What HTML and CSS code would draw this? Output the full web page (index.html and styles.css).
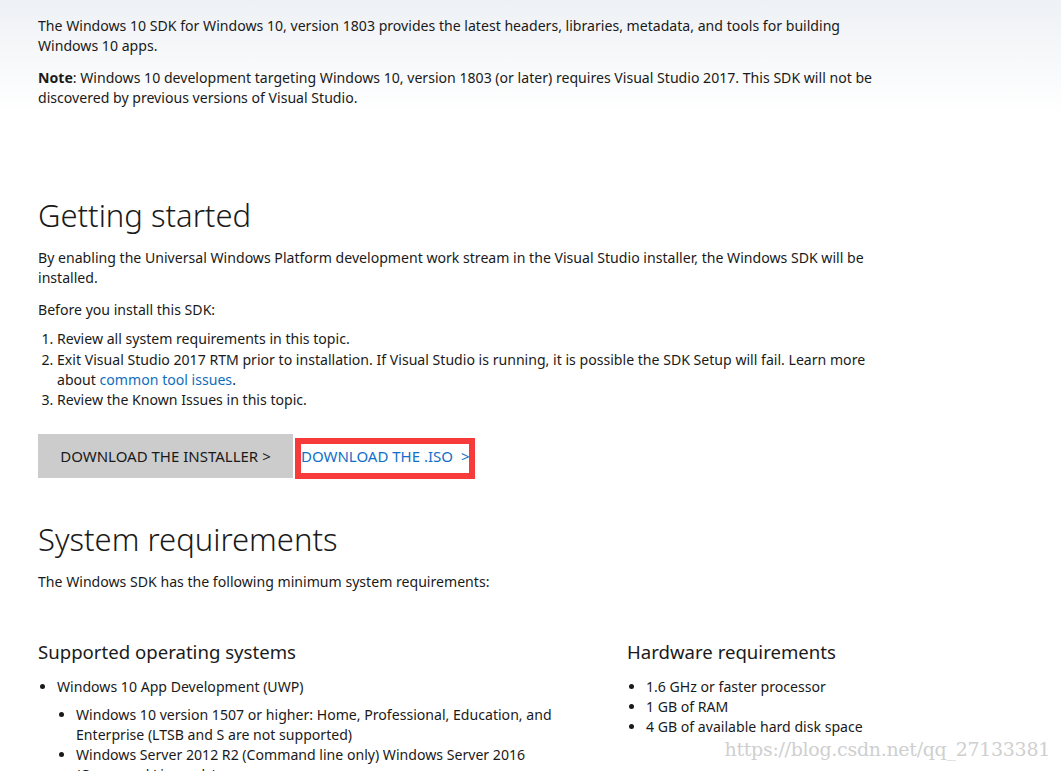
FILE: index.html
```html
<!DOCTYPE html>
<html>
<head>
<meta charset="utf-8">
<link rel="stylesheet" href="styles.css">
</head>
<body>
<div class="page">
  <section class="intro">
    <p>The Windows 10 SDK for Windows 10, version 1803 provides the latest headers, libraries, metadata, and tools for building Windows 10 apps.</p>
    <p><strong>Note</strong>: Windows 10 development targeting Windows 10, version 1803 (or later) requires Visual Studio 2017. This SDK will not be discovered by previous versions of Visual Studio.</p>
  </section>

  <section class="started">
    <h2>Getting started</h2>
    <p>By enabling the Universal Windows Platform development work stream in the Visual Studio installer, the Windows SDK will be installed.</p>
    <p>Before you install this SDK:</p>
    <ol>
      <li>Review all system requirements in this topic.</li>
      <li>Exit Visual Studio 2017 RTM prior to installation. If Visual Studio is running, it is possible the SDK Setup will fail. Learn more about <a href="#">common tool issues</a>.</li>
      <li>Review the Known Issues in this topic.</li>
    </ol>
    <div class="buttons">
      <a class="btn-gray" href="#">DOWNLOAD THE INSTALLER <span class="chev">&gt;</span></a>
      <a class="btn-iso" href="#">DOWNLOAD THE .ISO <span class="chev">&gt;</span></a>
    </div>
  </section>

  <section class="sysreq">
    <h2>System requirements</h2>
    <p>The Windows SDK has the following minimum system requirements:</p>
    <div class="cols">
      <div class="col">
        <h3>Supported operating systems</h3>
        <ul>
          <li>Windows 10 App Development (UWP)
            <ul>
              <li>Windows 10 version 1507 or higher: Home, Professional, Education, and Enterprise (LTSB and S are not supported)</li>
              <li>Windows Server 2012 R2 (Command line only) Windows Server 2016 (Command Line only)</li>
            </ul>
          </li>
        </ul>
      </div>
      <div class="col">
        <h3>Hardware requirements</h3>
        <ul>
          <li>1.6 GHz or faster processor</li>
          <li>1 GB of RAM</li>
          <li>4 GB of available hard disk space</li>
        </ul>
      </div>
    </div>
  </section>
</div>
<div class="watermark">https://blog.csdn.net/qq_27133381</div>
</body>
</html>
```

FILE: styles.css
```css
html, body {
  margin: 0;
  padding: 0;
}
body {
  width: 1061px;
  height: 771px;
  overflow: hidden;
  position: relative;
  background: linear-gradient(to bottom, #eef1f5 0px, #ffffff 115px, #ffffff 100%);
  font-family: "Segoe UI", "Noto Sans", "Open Sans", sans-serif;
  font-size: 14.1px;
  line-height: 20px;
  color: #1a1a1a;
}
.page {
  padding: 16px 0 0 38px;
  width: 850px;
}
p {
  margin: 0 0 12px 0;
}
strong {
  font-weight: 700;
}
a {
  color: #0f6cbd;
  text-decoration: none;
}
.started {
  margin-top: 87px;
}
h2 {
  font-weight: 300;
  font-size: 31px;
  line-height: 40px;
  margin: 0 0 13px 0;
  color: #1a1a1a;
}
ol {
  margin: -3px 0 0 0;
  padding-left: 19px;
}
ol li + li {
  margin-top: 0.5px;
}
.buttons {
  display: flex;
  align-items: flex-start;
  margin-top: 24px;
  gap: 2px;
}
.btn-gray {
  display: flex;
  align-items: center;
  justify-content: center;
  width: 255px;
  height: 44px;
  background: #cccccc;
  color: #1a1a1a;
  font-size: 15px;
  white-space: nowrap;
}
.btn-iso {
  display: flex;
  align-items: center;
  box-sizing: border-box;
  width: 180px;
  height: 41px;
  margin-top: 4px;
  border: 6px solid #f73a3a;
  padding: 0 0 5px 0;
  color: #1170c7;
  font-size: 15px;
  white-space: nowrap;
}
.chev {
  margin-left: 4px;
}
.btn-iso .chev {
  margin-left: 8px;
}
.sysreq {
  margin-top: 40px;
}
.sysreq h2 {
  margin-bottom: 13px;
}
.sysreq > p {
  margin-bottom: 0;
}
.cols {
  display: grid;
  grid-template-columns: 589px 1fr;
  margin-top: 47px;
}
h3 {
  font-weight: 400;
  font-size: 18.6px;
  line-height: 26px;
  margin: 0 0 12px 0;
}
ul {
  margin: 0;
  padding-left: 19px;
  list-style: disc;
}
ul ul {
  margin-top: 8px;
  padding-left: 19px;
}
.col {
  width: 520px;
}
.watermark {
  position: absolute;
  right: 11px;
  top: 739px;
  font-family: "DejaVu Serif", "Liberation Serif", serif;
  font-size: 19px;
  color: #cfcfcf;
  letter-spacing: -0.3px;
}
```
